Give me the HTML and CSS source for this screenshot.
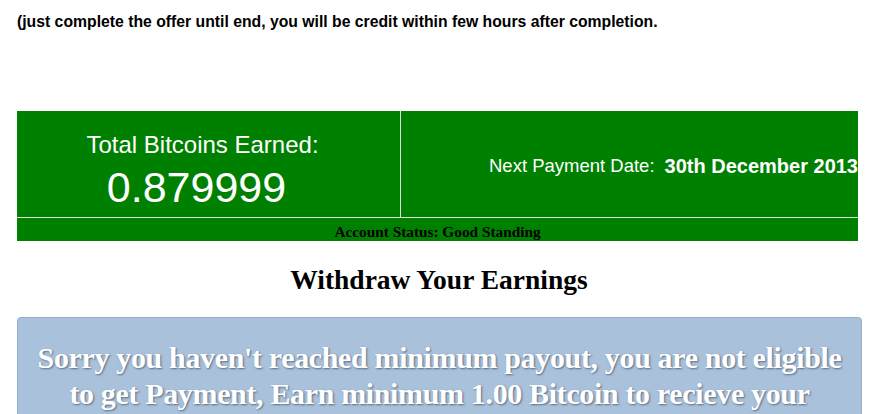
FILE: index.html
```html
<!DOCTYPE html>
<html>
<head>
<meta charset="utf-8">
<link rel="stylesheet" href="styles.css">
</head>
<body>
<div class="page">
  <p class="note">(just complete the offer until end, you will be credit within few hours after completion.</p>
  <div class="stats">
    <div class="row">
      <div class="cell left">
        <div class="label">Total Bitcoins Earned:</div>
        <div class="amount">0.879999</div>
      </div>
      <div class="cell right">
        <span class="plabel">Next Payment Date:</span><span class="pdate">30th December 2013</span>
      </div>
    </div>
    <div class="status">Account Status: Good Standing</div>
  </div>
  <h2 class="title">Withdraw Your Earnings</h2>
  <div class="alert">Sorry you haven't reached minimum payout, you are not eligible to get Payment, Earn minimum 1.00 Bitcoin to recieve your payment</div>
</div>
</body>
</html>
```
FILE: styles.css
```css
html, body { margin: 0; padding: 0; background: #fff; overflow: hidden; }
.page { padding: 0 35px 0 17px; width: 844px; }
.note {
  margin: 0; padding-top: 13px;
  font-family: "Liberation Sans", Arial, sans-serif;
  font-weight: bold; font-size: 15.75px; line-height: 18px; color: #000;
}
.stats {
  margin-top: 80px; width: 841px; background: #008000;
}
.row { display: flex; height: 106px; border-bottom: 1px solid #e0e0e0; }
.cell { color: #fff; font-family: "Liberation Sans", Arial, sans-serif; }
.left {
  width: 384px; border-right: 1px solid #e0e0e0; box-sizing: border-box;
  display: flex; flex-direction: column; align-items: center; justify-content: flex-start;
  padding-top: 20px;
}
.label { font-size: 24px; line-height: 28px; margin-right: 12px; }
.amount { font-size: 43px; line-height: 46px; margin-left: -24px; margin-top: 5px; }
.right {
  flex: 1; display: flex; align-items: center; justify-content: flex-end;
  white-space: nowrap; overflow: hidden; padding-top: 4px;
}
.plabel { font-size: 18.5px; }
.pdate { font-size: 20px; font-weight: bold; margin-left: 10px; }
.status {
  height: 23px; line-height: 27px; text-align: center;
  font-family: "Liberation Serif", "Times New Roman", serif;
  font-weight: bold; font-size: 15.3px; color: #000;
}
.title {
  margin: 24px 0 0; text-align: center;
  font-family: "Liberation Serif", "Times New Roman", serif;
  font-weight: bold; font-size: 27.5px; line-height: 30px; color: #000;
}
.alert {
  margin-top: 22px; width: 845px;
  background: #a9c1da; border: 1px solid #94aecb; border-radius: 4px;
  padding: 22px 14px 20px; box-sizing: border-box;
  text-align: center; color: #fff;
  font-family: "Liberation Serif", "Times New Roman", serif;
  font-weight: bold; font-size: 30px; line-height: 36px; letter-spacing: -0.35px;
  text-shadow: 1px 1px 2px #5a6b80;
}
```
